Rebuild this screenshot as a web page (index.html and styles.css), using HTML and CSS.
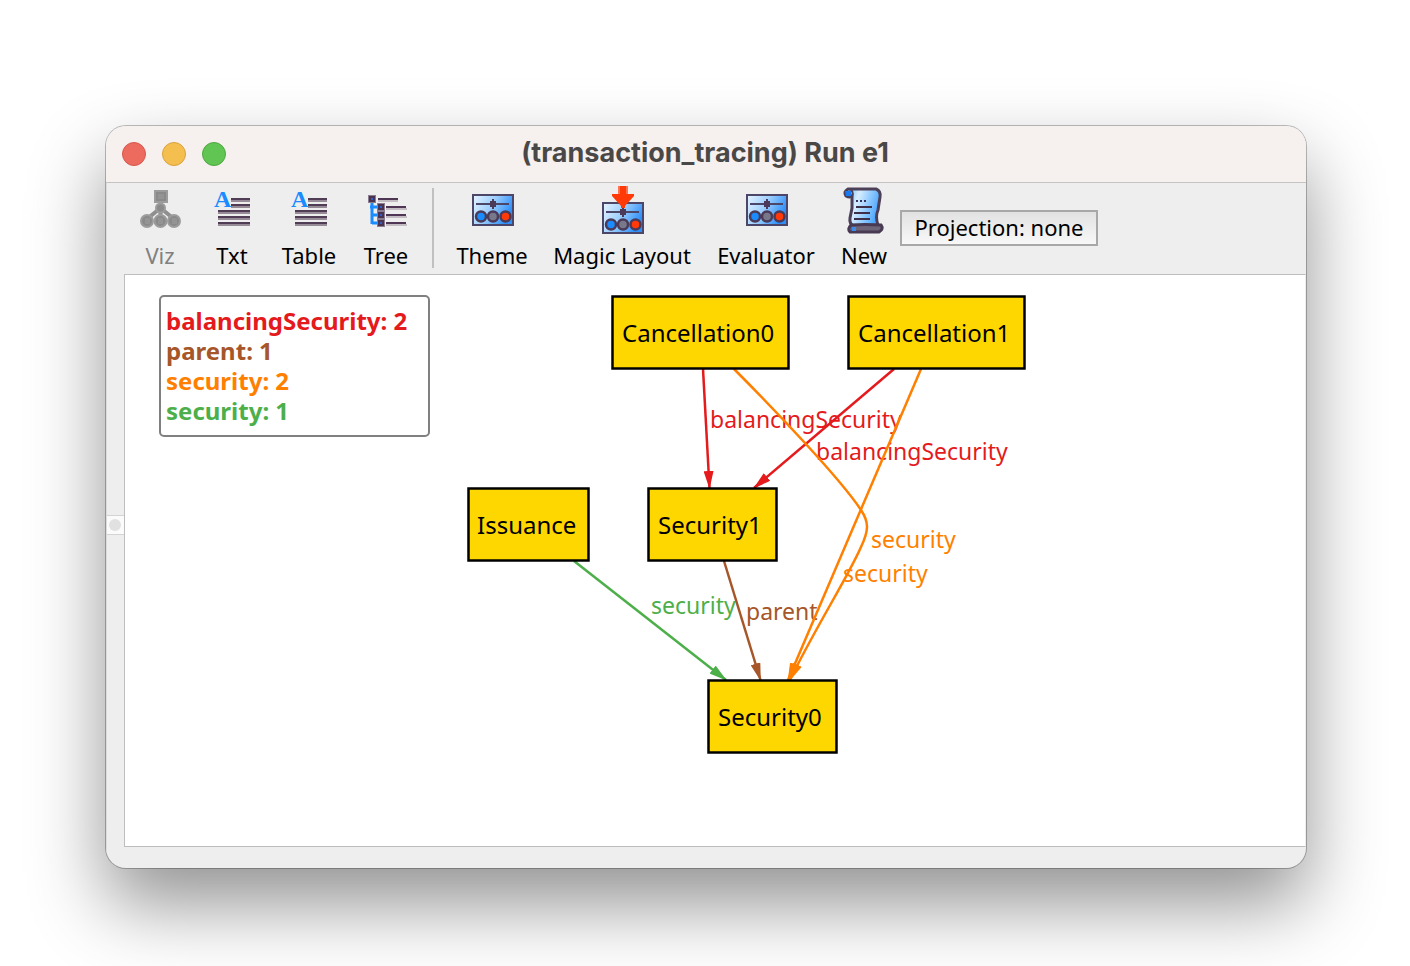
FILE: index.html
```
<!DOCTYPE html>
<html lang="en">
<head>
<meta charset="utf-8">
<title>(transaction_tracing) Run e1</title>
<link rel="stylesheet" href="styles.css">
</head>
<body>
<svg class="defs" aria-hidden="true">
  <defs>
    <linearGradient id="panel" x1="0" y1="0" x2="1" y2="0.4">
      <stop offset="0" stop-color="#e8f4ff"/>
      <stop offset="0.5" stop-color="#9fd0ff"/>
      <stop offset="1" stop-color="#2f8ff8"/>
    </linearGradient>
    <linearGradient id="paper" x1="0" y1="0" x2="1" y2="0.3">
      <stop offset="0" stop-color="#58b0ff"/>
      <stop offset="0.4" stop-color="#d8eeff"/>
      <stop offset="1" stop-color="#4ea8ff"/>
    </linearGradient>
    <symbol id="sliders" viewBox="0 0 42 32">
      <rect x="1" y="1" width="40" height="30" fill="url(#panel)" stroke="#4c4668" stroke-width="2"/>
      <path d="M4 10H37" stroke="#4c4668" stroke-width="2"/>
      <path d="M18 7h6v6h-6zM20 5h2v10h-2z" fill="#4c3a5a"/>
      <g stroke="#4a3a58" stroke-width="2.500">
        <circle cx="9" cy="22.500" r="5" fill="#1a8cff"/>
        <circle cx="21" cy="22.500" r="5" fill="#77788a"/>
        <circle cx="33.500" cy="22.500" r="5" fill="#ff3a08"/>
      </g>
    </symbol>
    <symbol id="lines" viewBox="0 0 48 48">
      <path d="M23 13H42M23 19H42M10 25H42M10 31H42M10 37H42" stroke="#513c55" stroke-width="2"/>
      <path d="M23 15H42M23 21H42M10 27H42M10 33H42M10 39H42" stroke="#978b97" stroke-width="2"/>
      <text class="letter" x="6" y="21">A</text>
    </symbol>
  </defs>
</svg>

<main class="window">
  <header class="titlebar">
    <div class="lights">
      <button class="light close" aria-label="Close"></button>
      <button class="light minimize" aria-label="Minimize"></button>
      <button class="light zoom" aria-label="Zoom"></button>
    </div>
    <h1 class="title">(transaction_tracing) Run e1</h1>
  </header>

  <div class="body">
    <div class="gutter"><button class="handle" aria-label="Toggle side panel"></button></div>
    <div class="pane">
      <nav class="toolbar">
        <button class="tool" disabled>
          <svg class="icon" viewBox="0 0 48 48">
            <path d="M24.500 14V32M24.500 22L11 33M24.500 22L38 33" stroke="#8f8f8f" stroke-width="4"/>
            <g fill="#8a8a8a" stroke="#9c9c9c" stroke-width="2">
              <rect x="19" y="5" width="12" height="11"/>
              <circle cx="24.500" cy="22" r="4.500"/>
              <circle cx="11" cy="35" r="6"/>
              <circle cx="24.500" cy="35" r="6"/>
              <circle cx="38" cy="35" r="6"/>
            </g>
            <path d="M22 8h6v5h-6zM9 32h5v6H9zM22 32h5v6h-5zM36 32h5v6h-5z" fill="#949494"/>
          </svg>
          <span>Viz</span>
        </button>
        <button class="tool">
          <svg class="icon"><use href="#lines"/></svg>
          <span>Txt</span>
        </button>
        <button class="tool w58">
          <svg class="icon"><use href="#lines"/></svg>
          <span>Table</span>
        </button>
        <button class="tool">
          <svg class="icon" viewBox="0 0 48 48">
            <path d="M16 15H36M24 23H45M24 31H45M24 39H45" stroke="#c3bcc3" stroke-width="2"/>
            <path d="M16 13H36M24 21H44M24 29H44M24 37H44" stroke="#4f3655" stroke-width="2"/>
            <path d="M10 16V38M8 21H16M10 29H16M10 37H16" fill="none" stroke="#1a8cff" stroke-width="3"/>
            <g fill="#4a3350" stroke="#8b7d90" stroke-width="1">
              <rect x="6.500" y="9.500" width="7" height="7"/>
              <rect x="15.500" y="17.500" width="7" height="7"/>
              <rect x="15.500" y="25.500" width="7" height="7"/>
              <rect x="15.500" y="33.500" width="7" height="7"/>
            </g>
            <path d="M9 12h2v2h-2zM18 20h2v2h-2zM18 28h2v2h-2zM18 36h2v2h-2z" fill="#2f5fc8"/>
          </svg>
          <span>Tree</span>
        </button>
        <div class="separator"></div>
        <button class="tool w72">
          <svg class="icon" viewBox="0 0 48 48"><use href="#sliders" x="4" y="8" width="42" height="32"/></svg>
          <span>Theme</span>
        </button>
        <button class="tool w140">
          <svg class="icon" viewBox="0 0 48 48">
            <use href="#sliders" x="4" y="16" width="42" height="32"/>
            <path d="M20 0h10v8h6v2l-9 10v2h-4v-2l-9-10v-2h6z" fill="#ff3a08"/>
            <path d="M20 0h2v8h-2zM28 0h2v8h-2z" fill="#ff7350"/>
          </svg>
          <span>Magic Layout</span>
        </button>
        <button class="tool w100">
          <svg class="icon" viewBox="0 0 48 48"><use href="#sliders" x="4" y="8" width="42" height="32"/></svg>
          <span>Evaluator</span>
        </button>
        <button class="tool">
          <svg class="icon" viewBox="0 0 48 48">
            <path d="M8 3H36Q41 5 40 11L38 24Q35 31 38 39L14 40Q9 38 10 32L12 22V10Q10 12 6 10Q3 6 8 3Z" fill="url(#paper)" stroke="#4c3f58" stroke-width="3"/>
            <path d="M5 5h6v5H6z" fill="#1a7af0"/>
            <path d="M10 3Q14 5 12 11" fill="none" stroke="#4c3f58" stroke-width="2"/>
            <path d="M11 39Q7 43 10 46H39Q44 43 41 39Q24 38 11 39Z" fill="#6d6478" stroke="#473a52" stroke-width="3"/>
            <path d="M12 41h4v4h-4z" fill="#3d8be8"/>
            <path d="M16 15h2M20 15h2M24 15h2" stroke="#33365e" stroke-width="2"/>
            <path d="M16 21H32M14 27H30M14 33H30" stroke="#3d3048" stroke-width="2"/>
          </svg>
          <span>New</span>
        </button>
        <button class="projection">Projection: none</button>
      </nav>

      <section class="canvas" aria-label="Instance graph">
        <svg class="graph">
          <defs>
            <marker id="arrow-red" class="red" markerUnits="userSpaceOnUse" markerWidth="18" markerHeight="10" refX="17" refY="5" orient="auto"><path class="head" d="M0 0L18 5L0 10Z"/></marker>
            <marker id="arrow-brown" class="brown" markerUnits="userSpaceOnUse" markerWidth="18" markerHeight="10" refX="17" refY="5" orient="auto"><path class="head" d="M0 0L18 5L0 10Z"/></marker>
            <marker id="arrow-orange" class="orange" markerUnits="userSpaceOnUse" markerWidth="18" markerHeight="10" refX="17" refY="5" orient="auto"><path class="head" d="M0 0L18 5L0 10Z"/></marker>
            <marker id="arrow-green" class="green" markerUnits="userSpaceOnUse" markerWidth="18" markerHeight="10" refX="17" refY="5" orient="auto"><path class="head" d="M0 0L18 5L0 10Z"/></marker>
          </defs>
          <g class="labels">
            <text class="red" x="585" y="153">balancingSecurity</text>
            <text class="red" x="691" y="185">balancingSecurity</text>
            <text class="orange" x="746" y="273">security</text>
            <text class="orange" x="718" y="307">security</text>
            <text class="green" x="526" y="339">security</text>
            <text class="brown" x="621" y="345">parent</text>
          </g>
          <g class="edges">
            <path class="red" marker-end="url(#arrow-red)" d="M578 94L584.500 213"/>
            <path class="red" marker-end="url(#arrow-red)" d="M769 94L629 213"/>
            <path class="orange" marker-end="url(#arrow-orange)" d="M609 94C645 130 715 203 736 235C744 247 744 255 736 272C723 302 689 355 665 405"/>
            <path class="orange" marker-end="url(#arrow-orange)" d="M796 94L663 405"/>
            <path class="brown" marker-end="url(#arrow-brown)" d="M599 286L635.500 405"/>
            <path class="green" marker-end="url(#arrow-green)" d="M449 286L601 405"/>
          </g>
          <g class="nodes">
            <rect x="487.500" y="21.500" width="176" height="72"/>
            <text x="497" y="67">Cancellation0</text>
            <rect x="723.500" y="21.500" width="176" height="72"/>
            <text x="733" y="67">Cancellation1</text>
            <rect x="343.500" y="213.500" width="120" height="72"/>
            <text x="352" y="259">Issuance</text>
            <rect x="523.500" y="213.500" width="128" height="72"/>
            <text x="533" y="259">Security1</text>
            <rect x="583.500" y="405.500" width="128" height="72"/>
            <text x="593" y="451">Security0</text>
          </g>
        </svg>
        <ul class="legend">
          <li class="red">balancingSecurity: 2</li>
          <li class="brown">parent: 1</li>
          <li class="orange">security: 2</li>
          <li class="green">security: 1</li>
        </ul>
      </section>
    </div>
  </div>
</main>
</body>
</html>
```

FILE: styles.css
```
* {
  box-sizing: border-box;
}

body {
  margin: 0;
  min-height: 100vh;
  padding: 126px 104px 98px 106px;
  display: flex;
  background: #fff;
  overflow: hidden;
  font-family: "Noto Sans", "Open Sans", sans-serif;
  color: #000;
}

button {
  font: inherit;
  color: inherit;
  margin: 0;
  padding: 0;
  border: 0;
  background: none;
}

.defs {
  position: absolute;
  width: 0;
  height: 0;
}

.window {
  flex: 1;
  min-width: 0;
  display: flex;
  flex-direction: column;
  border-radius: 20px;
  background: #eee;
  overflow: hidden;
  box-shadow: 0 0 0 1px rgba(0, 0, 0, 0.25), 0 36px 76px rgba(0, 0, 0, 0.43);
}

.titlebar {
  display: grid;
  grid-template-columns: 1fr auto 1fr;
  align-items: center;
  height: 57px;
  padding: 0 18px 0 16px;
  background: #f6f0ef;
  border-bottom: 1px solid #c6c4c3;
}

.lights {
  display: flex;
  gap: 16px;
}

.light {
  width: 24px;
  height: 24px;
  border-radius: 50%;
  border: 1px solid;
}

.close {
  background: #ed6a5e;
  border-color: #d5574c;
}

.minimize {
  background: #f5bf4f;
  border-color: #d8a13e;
}

.zoom {
  background: #61c554;
  border-color: #4fa73f;
}

.title {
  margin: 0;
  padding-bottom: 2px;
  font: 700 27px/32px Inter, sans-serif;
  color: #4a4847;
}

.body {
  flex: 1;
  display: flex;
}

.gutter {
  width: 18px;
  padding-bottom: 2px;
  display: flex;
  align-items: center;
  border-left: 1px solid #dcdcdc;
}

.handle {
  width: 17px;
  height: 20px;
  display: flex;
  align-items: center;
  padding-left: 2px;
  background: #fbfbfb;
  border-top: 1px solid #d4d4d4;
  border-bottom: 1px solid #d4d4d4;
}

.handle::before {
  content: "";
  width: 12px;
  height: 12px;
  border-radius: 50%;
  background: #e1e1e1;
}

.pane {
  flex: 1;
  min-width: 0;
  display: flex;
  flex-direction: column;
  padding-bottom: 21px;
}

.toolbar {
  display: flex;
  align-items: flex-start;
  height: 91px;
  padding-top: 3px;
  font-size: 22px;
  line-height: 30px;
}

.tool {
  width: 72px;
  padding: 0 12px;
  display: flex;
  flex-direction: column;
  align-items: center;
  gap: 6px;
  white-space: nowrap;
}

.tool:disabled {
  color: #808080;
}

.w58 {
  width: 82px;
}

.w72 {
  width: 96px;
}

.w140 {
  width: 164px;
}

.w100 {
  width: 124px;
}

.icon {
  width: 48px;
  height: 48px;
}

.letter {
  font: bold 24px "Liberation Serif", serif;
  fill: #1a8cff;
}

.separator {
  width: 2px;
  height: 80px;
  margin: 2px 10px;
  background: #c0c0c0;
}

.projection {
  min-width: 198px;
  height: 36px;
  margin: 24px 0;
  padding: 0 10px 2px;
  border: 2px solid #a8a8a8;
  background: linear-gradient(#e2e2e2, #f8f8f8);
}

.canvas {
  flex: 1;
  min-height: 480px;
  position: relative;
  display: flex;
  background: #fff;
  border: 1px solid #bdbdbd;
  border-right-color: #eee;
}

.graph {
  flex: 1;
  min-width: 0;
}

.legend {
  position: absolute;
  left: 34px;
  top: 20px;
  width: 271px;
  margin: 0;
  padding: 9px 5px;
  list-style: none;
  border: 2px solid #808080;
  border-radius: 5px;
  background: #fff;
  font-size: 24px;
  font-weight: 700;
  line-height: 30px;
  white-space: nowrap;
}

.red {
  color: #e41a1c;
}

.brown {
  color: #a65628;
}

.orange {
  color: #ff7f00;
}

.green {
  color: #4daf4a;
}

.head {
  fill: currentColor;
}

.edges path {
  fill: none;
  stroke: currentColor;
  stroke-width: 2.5px;
}

.edges .head {
  stroke: none;
}

.labels text {
  fill: currentColor;
  font-size: 23px;
}

.nodes rect {
  fill: #ffd700;
  stroke: #000;
  stroke-width: 2.5px;
}

.nodes text {
  font-size: 24px;
}
```
